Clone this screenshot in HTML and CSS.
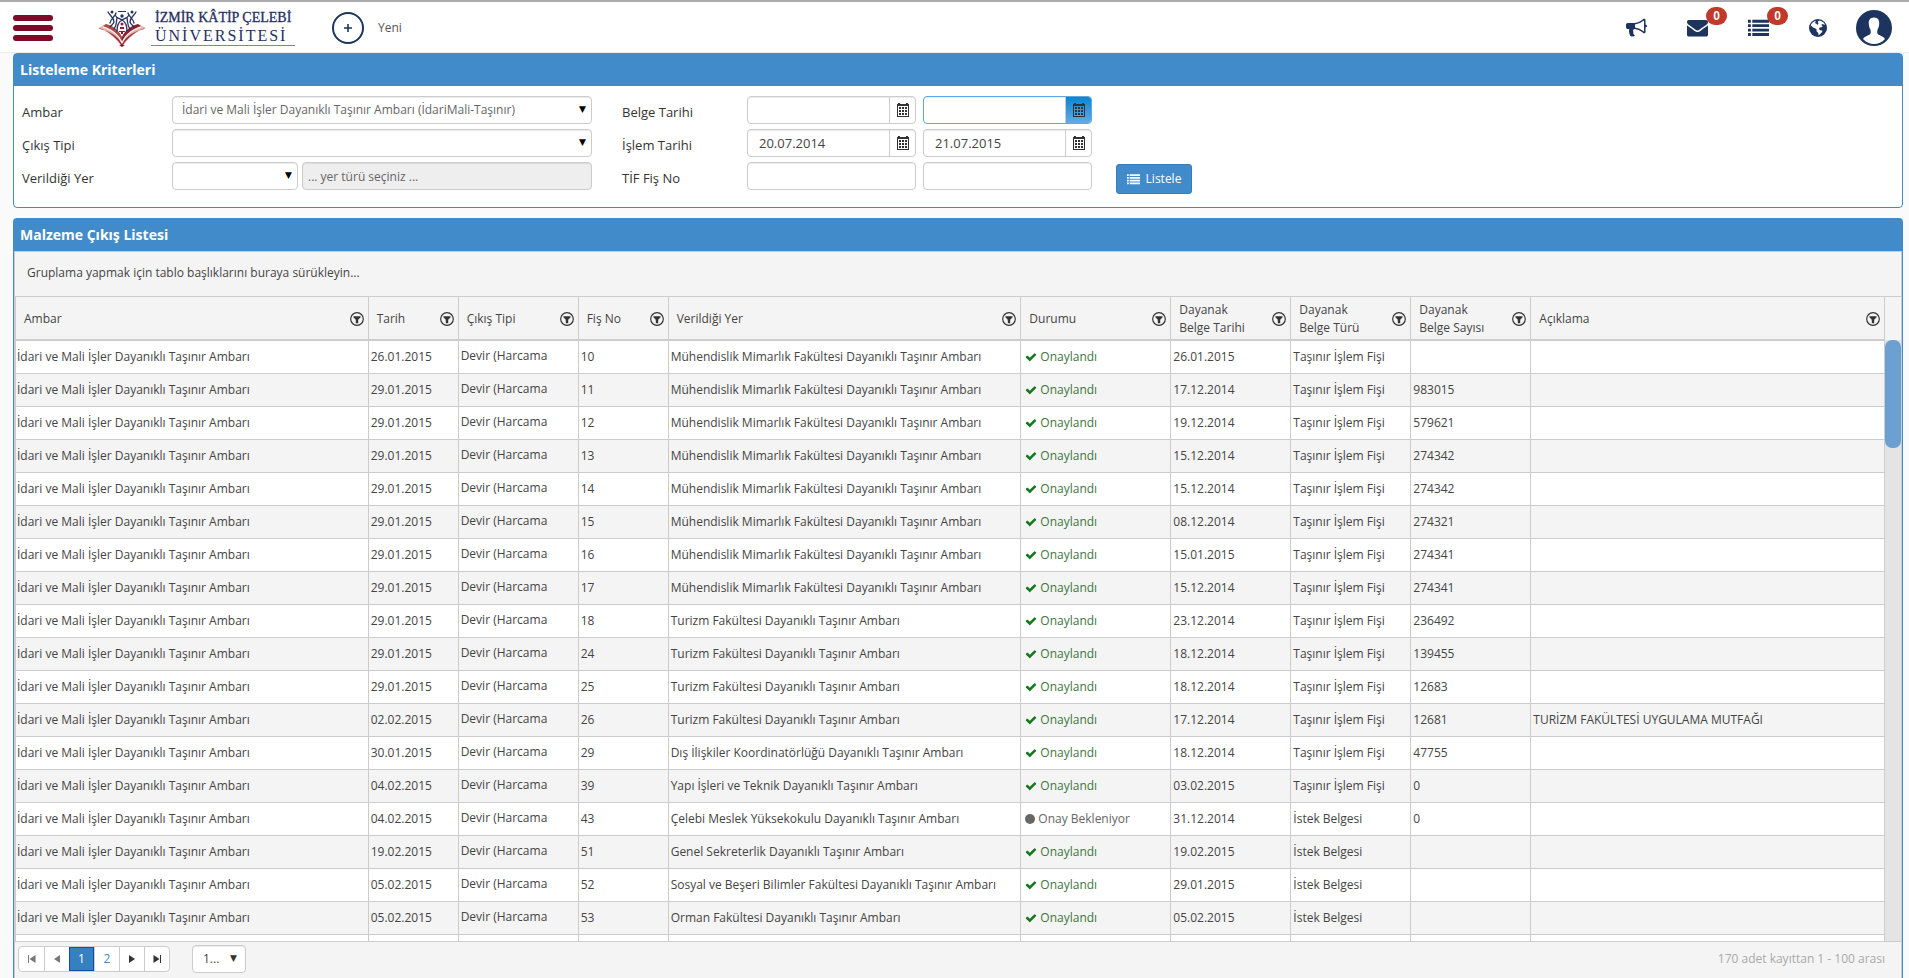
FILE: index.html
```html
<!DOCTYPE html>
<html lang="tr">
<head>
  <meta charset="utf-8">
  <title>Malzeme Çıkış Listesi</title>
  <link rel="stylesheet" href="styles.css">
</head>
<body>
  <svg class="sprite" aria-hidden="true">
    <symbol id="i-check" viewBox="0 0 1792 1792"><path d="M1671 566q0 40-28 68l-724 724-136 136q-28 28-68 28t-68-28l-136-136-362-362q-28-28-28-68t28-68l136-136q28-28 68-28t68 28l294 295 656-657q28-28 68-28t68 28l136 136q28 28 28 68z"/></symbol>
    <symbol id="i-circle" viewBox="0 0 12 12"><circle cx="6" cy="6" r="6"/></symbol>
    <symbol id="i-filter" viewBox="0 0 14 14"><circle cx="7" cy="7" r="6.3" fill="none" stroke="currentColor" stroke-width="1.2"/><path d="M3.400 4.200h7.200v1L8.200 7.800v3.400H5.800V7.800L3.400 5.200z"/></symbol>
    <symbol id="i-list" viewBox="0 0 22 18"><path d="M0 1h3v3H0zM4.500 1H22v3H4.500zM0 5.600h3v3H0zM4.500 5.600H22v3H4.500zM0 10.200h3v3H0zM4.500 10.200H22v3H4.500zM0 14.800h3v3H0zM4.500 14.800H22v3H4.500z"/></symbol>
    <symbol id="i-calendar" viewBox="0 0 12 14"><path fill-rule="evenodd" d="M1 0h2v1h6V0h2v1h1v13H0V1h1zM1 3v10h10V3z"/><path d="M2 4h2v2H2zM5 4h2v2H5zM8 4h2v2H8zM2 7h2v2H2zM5 7h2v2H5zM8 7h2v2H8zM2 10h2v2H2zM5 10h2v2H5zM8 10h2v2H8z"/></symbol>
  </svg>

  <header class="topbar">
    <button class="menu-btn" aria-label="Menü"><span></span><span></span><span></span></button>
    <a class="logo" href="#">
      <svg class="logo-mark" viewBox="0 0 48 38" aria-hidden="true">
        <path d="M0 19l8-4c8 2 13 7 16 13 3-6 8-11 16-13l8 4c-9 3-17 9-24 19C17 28 9 22 0 19z" fill="#e3b9b0"/>
        <path d="M8 15c8 2 13 7 16 13v5c-3-8-10-13-19-16z" fill="#b04a48"/>
        <path d="M40 15c-8 2-13 7-16 13v5c3-8 10-13 19-16z" fill="#8c1f33"/>
        <path d="M2 20c9 2 18 7 22 15 4-8 13-13 22-15l1-1c-9 3-17 9-22 17h-2C18 28 10 22 1 19z" fill="#9a2f3c"/>
        <path d="M5 18c9 3 16 8 19 16 3-8 10-13 19-16" fill="none" stroke="#fff"/>
        <path d="M21 36h6l-3 2z" fill="#7d1128"/>
        <g fill="none" stroke="#26345f" stroke-width="1.300" stroke-linecap="round">
          <path d="M10 3c2 4 6 5 6 10-1 3-3 3-4 5M18 4c-1 4-5 5-6 10M38 3c-2 4-6 5-6 10 1 3 3 3 4 5M30 4c1 4 5 5 6 10M17 6c2 4 5 3 7 5 2-2 5-1 7-5M24 11c-4 2-5 5-5 11M24 11c4 2 5 5 5 11M19 9c-1 5 0 7-3 11M29 9c1 5 0 7 3 11"/>
        </g>
        <g fill="#26345f"><circle cx="14" cy="3" r="1.500"/><circle cx="34" cy="3" r="1.500"/><circle cx="24" cy="7" r="1.700"/><path d="M20 2h8v1h-8z"/></g>
        <g fill="#a3122f"><circle cx="24" cy="15" r="1.500"/><path d="M22 18h4v2h-4zM21 22h6v1h-2v2h-2v-2h-2z"/></g>
      </svg>
      <span class="logo-text"><span>İZMİR KÂTİP ÇELEBİ</span><span class="logo-sub">ÜNİVERSİTESİ</span></span>
    </a>
    <button class="new-btn">
      <svg width="32" height="32" viewBox="0 0 32 32" aria-hidden="true"><circle cx="16" cy="16" r="15" fill="none" stroke="#1d355e" stroke-width="2"/><path d="M16 12v8M12 16h8" stroke="#1d355e" stroke-width="1.600"/></svg>
      Yeni
    </button>
    <nav class="tools">
      <a class="tool" href="#" aria-label="Duyurular"><svg width="21" height="21" viewBox="0 0 1792 1792"><path d="M1664 640q53 0 90.500 37.500t37.500 90.500-37.500 90.500-90.500 37.500v384q0 52-38 90t-90 38q-417-347-812-380-58 19-91 66t-31 100.500 40 92.500q-20 33-23 65.500t6 58 33.500 55 48 50 61.500 50.500q-29 58-111.500 83t-168.500 11.500-132-55.500q-7-23-29.500-87.500t-32-94.500-23-89-15-101 3.500-98.500 22-110.500h-122q-66 0-113-47t-47-113v-192q0-66 47-113t113-47h480q435 0 896-384 52 0 90 38t38 90v384zm-128 604v-954q-394 302-768 343v270q377 42 768 341z"/></svg></a>
      <a class="tool" href="#" aria-label="Mesajlar"><svg width="21" height="21" viewBox="0 0 1792 1792"><path d="M1792 710v794q0 66-47 113t-113 47h-1472q-66 0-113-47t-47-113v-794q44 49 101 87 362 246 497 345 57 42 92.500 65.500t94.500 48 110 24.500h2q51 0 110-24.500t94.500-48 92.500-65.500q170-123 498-345 57-39 100-87zm0-294q0 79-49 151t-122 123q-376 261-468 325-10 7-42.500 31t-54 38.500-52 32.500-57.500 27-50 9h-2q-23 0-50-9t-57.500-27-52-32.500-54-38.500-42.500-31q-91-64-262-182.500t-205-142.500q-62-42-117-115.500t-55-136.500q0-78 41.500-130t118.500-52h1472q65 0 112.500 47t47.500 113z"/></svg><span class="badge">0</span></a>
      <a class="tool" href="#" aria-label="Görevler"><svg width="21" height="21"><use href="#i-list"/></svg><span class="badge">0</span></a>
      <a class="tool" href="#" aria-label="Dil"><svg width="18" height="18" viewBox="0 0 18 18"><circle cx="9" cy="9" r="9"/><path fill="#fff" d="M10 1.500l2 .5 2.500 1.500 1.500 2-1 .3-1-.8-1.500.6.3 1.200 1 .6-1.300.8-1.700.2-1 1.600 1.500 1.300 2 .3-.2 1.500-2 2-1.500 1.500-.3-2.600-1.800-1.700.2-1.800L6 9.200 4 8.500 2.500 6.500l-.7 1.700L2 5.500 3.800 3.200 6 2l1 .8L5.500 4l1.700.6L8.500 6l1-1.400L8.800 3z"/></svg></a>
      <a class="tool avatar" href="#" aria-label="Profil"><svg width="36" height="36" viewBox="0 0 36 36"><circle cx="18" cy="18" r="18"/><path fill="#fff" d="M18 7.500c4 0 5.500 2.800 5.200 6.300-.2 3-1 4.700-1.700 6-.5 2.200-.3 4 .8 4.700 2.500 1.500 5.700 2 6.700 4.500C26 32.200 22 34 18 34s-8-1.800-11-5c1-2.500 4.200-3 6.700-4.500 1.100-.7 1.300-2.500.8-4.700-.7-1.300-1.500-3-1.700-6-.3-3.500 1.200-6.300 5.200-6.300z"/></svg></a>
    </nav>
  </header>

  <main class="page">
    <section class="panel">
      <h2 class="panel-heading">Listeleme Kriterleri</h2>
      <form class="criteria">
        <label for="ambar">Ambar</label>
        <div class="select"><select id="ambar"><option>İdari ve Mali İşler Dayanıklı Taşınır Ambarı (İdariMali-Taşınır)</option></select></div>
        <label class="second" for="belge1">Belge Tarihi</label>
        <div class="date"><input type="text" id="belge1"><button type="button" aria-label="Takvim"><svg width="12" height="14"><use href="#i-calendar"/></svg></button></div>
        <div class="date active"><input type="text" aria-label="Belge tarihi bitiş"><button type="button" aria-label="Takvim"><svg width="12" height="14"><use href="#i-calendar"/></svg></button></div>

        <label class="first" for="cikis">Çıkış Tipi</label>
        <div class="select"><select id="cikis"><option></option></select></div>
        <label class="second" for="islem1">İşlem Tarihi</label>
        <div class="date"><input type="text" id="islem1" value="20.07.2014"><button type="button" aria-label="Takvim"><svg width="12" height="14"><use href="#i-calendar"/></svg></button></div>
        <div class="date"><input type="text" value="21.07.2015" aria-label="İşlem tarihi bitiş"><button type="button" aria-label="Takvim"><svg width="12" height="14"><use href="#i-calendar"/></svg></button></div>

        <label class="first" for="yer">Verildiği Yer</label>
        <div class="place">
          <div class="select"><select id="yer"><option></option></select></div>
          <input class="field" type="text" placeholder="... yer türü seçiniz ..." aria-label="Yer" disabled>
        </div>
        <label class="second" for="tif1">TİF Fiş No</label>
        <input class="field" type="text" id="tif1">
        <input class="field" type="text" aria-label="TİF fiş no bitiş">
        <button type="button" class="btn"><svg width="13" height="12"><use href="#i-list"/></svg>Listele</button>
      </form>
    </section>

    <section class="panel list-panel">
      <h2 class="panel-heading">Malzeme Çıkış Listesi</h2>
      <div class="group-bar">Gruplama yapmak için tablo başlıklarını buraya sürükleyin...</div>
      <div class="grid">
        <div class="grid-scroll">
          <table>
            <colgroup><col><col class="w90"><col class="w120"><col class="w90"><col><col class="w150"><col class="w120"><col class="w120"><col class="w120"><col></colgroup>
            <thead><tr id="head"></tr></thead>
            <tbody id="rows"></tbody>
          </table>
        </div>
        <div class="scrollbar"><div class="scroll-track"><div class="scroll-thumb"></div></div></div>
      </div>
      <footer class="pager">
        <div class="pages">
          <button disabled aria-label="İlk sayfa"><svg width="8" height="8" viewBox="0 0 8 8"><path d="M0 0h1v8H0zM7.500 0v8L1.500 4z"/></svg></button>
          <button disabled aria-label="Önceki sayfa"><svg width="8" height="8" viewBox="0 0 8 8"><path d="M7 0v8L1 4z"/></svg></button>
          <button class="current">1</button>
          <button class="num">2</button>
          <button aria-label="Sonraki sayfa"><svg width="8" height="8" viewBox="0 0 8 8"><path d="M1 0v8l6-4z"/></svg></button>
          <button aria-label="Son sayfa"><svg width="8" height="8" viewBox="0 0 8 8"><path d="M7 0h1v8H7zM.5 0v8l6-4z"/></svg></button>
        </div>
        <div class="select page-size"><select aria-label="Sayfa boyutu"><option>1...</option></select></div>
        <span class="pager-info">170 adet kayıttan 1 - 100 arası</span>
      </footer>
    </section>
  </main>

  <script>
    const heads = ["Ambar", "Tarih", "Çıkış Tipi", "Fiş No", "Verildiği Yer", "Durumu",
      "Dayanak Belge Tarihi", "Dayanak Belge Türü", "Dayanak Belge Sayısı", "Açıklama"];
    const muh = "Mühendislik Mimarlık Fakültesi", tur = "Turizm Fakültesi";
    const tif = "Taşınır İşlem Fişi", istek = "İstek Belgesi";

    // tarih, fiş no, verildiği yer, belge tarihi, belge türü, belge sayısı, açıklama
    const data = [
      ["26.01.2015", 10, muh, "26.01.2015", tif, ""],
      ["29.01.2015", 11, muh, "17.12.2014", tif, "983015"],
      ["29.01.2015", 12, muh, "19.12.2014", tif, "579621"],
      ["29.01.2015", 13, muh, "15.12.2014", tif, "274342"],
      ["29.01.2015", 14, muh, "15.12.2014", tif, "274342"],
      ["29.01.2015", 15, muh, "08.12.2014", tif, "274321"],
      ["29.01.2015", 16, muh, "15.01.2015", tif, "274341"],
      ["29.01.2015", 17, muh, "15.12.2014", tif, "274341"],
      ["29.01.2015", 18, tur, "23.12.2014", tif, "236492"],
      ["29.01.2015", 24, tur, "18.12.2014", tif, "139455"],
      ["29.01.2015", 25, tur, "18.12.2014", tif, "12683"],
      ["02.02.2015", 26, tur, "17.12.2014", tif, "12681", "TURİZM FAKÜLTESİ UYGULAMA MUTFAĞI"],
      ["30.01.2015", 29, "Dış İlişkiler Koordinatörlüğü", "18.12.2014", tif, "47755"],
      ["04.02.2015", 39, "Yapı İşleri ve Teknik", "03.02.2015", tif, "0"],
      ["04.02.2015", 43, "Çelebi Meslek Yüksekokulu", "31.12.2014", istek, "0"],
      ["19.02.2015", 51, "Genel Sekreterlik", "19.02.2015", istek, ""],
      ["05.02.2015", 52, "Sosyal ve Beşeri Bilimler Fakültesi", "29.01.2015", istek, ""],
      ["05.02.2015", 53, "Orman Fakültesi", "05.02.2015", istek, ""]
    ];

    document.getElementById("head").innerHTML = heads.map(h => `
      <th><div class="th"><span>${h.replace("Dayanak ", "Dayanak<br>")}</span><svg width="14" height="14"><use href="#i-filter"/></svg></div></th>
    `).join("");

    const ok = '<span class="ok"><svg width="12" height="12"><use href="#i-check"/></svg>Onaylandı</span>';
    const waiting = '<span class="waiting"><svg width="10" height="10"><use href="#i-circle"/></svg>Onay Bekleniyor</span>';

    document.getElementById("rows").innerHTML = data.map(d => `
      <tr>
        <td>İdari ve Mali İşler Dayanıklı Taşınır Ambarı</td>
        <td>${d[0]}</td><td class="type">Devir (Harcama</td><td>${d[1]}</td>
        <td>${d[2]} Dayanıklı Taşınır Ambarı</td>
        <td>${d[1] === 43 ? waiting : ok}</td>
        <td>${d[3]}</td><td>${d[4]}</td><td>${d[5]}</td><td>${d[6] || ""}</td>
      </tr>
    `).join("") + "<tr>" + "<td></td>".repeat(10) + "</tr>";
  </script>
</body>
</html>
```
FILE: styles.css
```css
* {
  box-sizing: border-box;
}

body {
  display: flex;
  flex-direction: column;
  height: 100vh;
  margin: 0;
  overflow: hidden;
  background: #fafafa;
  color: #444;
  font-family: "Open Sans", sans-serif;
  font-size: 12px;
  line-height: 18px;
}

button,
input,
select {
  font: inherit;
  color: inherit;
}

button {
  padding: 0;
  border: none;
  background: none;
  cursor: pointer;
}

svg {
  flex: none;
  fill: currentColor;
}

.sprite {
  position: absolute;
  width: 0;
  height: 0;
}

/* top bar */
.topbar {
  display: flex;
  align-items: center;
  flex: none;
  height: 53px;
  padding: 1px 17px 0 13px;
  background: #fff;
  border-top: 2px solid #aaa;
  border-bottom: 1px solid #eee;
}

.menu-btn {
  display: flex;
  flex-direction: column;
  gap: 4px;
  width: 40px;
}

.menu-btn span {
  height: 6px;
  border-radius: 3px;
  background: #7f0a28;
}

.logo {
  display: flex;
  align-items: center;
  gap: 5px;
  margin-left: 45px;
  color: #26305f;
  text-decoration: none;
}

.logo-mark {
  width: 48px;
  height: 38px;
}

.logo-text {
  display: flex;
  flex-direction: column;
  width: 144px;
  padding-left: 4px;
  border-bottom: 1px solid #7c86ad;
  font-family: "Liberation Serif", serif;
  font-size: 14px;
  white-space: nowrap;
  -webkit-text-stroke: 0.3px;
}

.logo-sub {
  font-size: 16px;
  letter-spacing: 2px;
  -webkit-text-stroke: 0;
}

.new-btn {
  display: flex;
  align-items: center;
  gap: 14px;
  margin-left: 37px;
  color: #555;
}

.tools {
  display: flex;
  align-items: center;
  gap: 40px;
  margin-left: auto;
}

.tool {
  position: relative;
  display: flex;
  color: #1d355e;
}

.avatar {
  margin-left: -11px;
}

.badge {
  position: absolute;
  top: -10px;
  left: 19px;
  width: 21px;
  height: 18px;
  border-radius: 9px;
  background: #c0392b;
  color: #fff;
  font: bold 12px/18px "Liberation Sans", sans-serif;
  text-align: center;
}

/* panels */
.page {
  display: flex;
  flex-direction: column;
  flex: 1;
  gap: 10px;
  min-height: 0;
  padding: 0 6px 0 13px;
}

.panel {
  border: 1px solid #428bca;
  border-radius: 4px;
  background: #fff;
}

.panel-heading {
  margin: 0;
  padding: 5px 6px 6px;
  background: #428bca;
  color: #fff;
  font-size: 14px;
  font-weight: 700;
  line-height: 21px;
}

.criteria {
  display: grid;
  grid-template-columns: 150px 420px 155px 169px 169px 76px;
  grid-auto-rows: 28px;
  row-gap: 5px;
  padding: 10px 8px 17px;
}

.criteria label {
  padding-top: 7px;
  color: #333;
  font-size: 13px;
}

.criteria .first {
  grid-column: 1;
}

.criteria .second {
  padding-left: 30px;
}

.select {
  position: relative;
}

.select select {
  width: 100%;
  height: 28px;
  padding: 0 9px;
  appearance: none;
  border: 1px solid #ccc;
  border-radius: 4px;
  background: #fff;
  box-shadow: inset 0 1px 1px rgba(0, 0, 0, 0.08);
  color: #666;
}

.select::after {
  content: "▼";
  position: absolute;
  top: 4px;
  right: 6px;
  color: #000;
  font: 9px/18px "DejaVu Sans", sans-serif;
  pointer-events: none;
}

.field,
.date {
  height: 28px;
  border: 1px solid #ccc;
  border-radius: 4px;
  background: #fff;
  box-shadow: inset 0 1px 1px rgba(0, 0, 0, 0.08);
}

.field {
  width: 100%;
  padding: 0 5px;
}

.field:disabled {
  background: #eee;
}

.field::placeholder {
  color: #666;
}

.place {
  display: grid;
  grid-template-columns: 126px 1fr;
  gap: 4px;
}

.date {
  display: flex;
  overflow: hidden;
}

/* second box of a from/to pair */
.date + .date,
.field + .field,
.btn {
  width: auto;
  min-width: 0;
}

.date input {
  flex: 1;
  min-width: 0;
  padding: 0 11px;
  border: none;
  outline: none;
  background: none;
  font-size: 13px;
}

.date button {
  display: flex;
  align-items: center;
  justify-content: center;
  width: 26px;
  border-left: 1px solid #ccc;
  color: #333;
}

.active {
  border-color: #5ba8e5;
}

.active button {
  background: linear-gradient(#0a86cf, #62abe8);
}

.date + .date,
.field + .field {
  margin-left: 7px;
  margin-right: -7px;
}

.btn {
  display: flex;
  align-items: center;
  justify-content: center;
  gap: 6px;
  height: 30px;
  margin: 2px -31px 0 31px;
  border: 1px solid #357ebd;
  border-radius: 3px;
  background: #428bca;
  color: #fff;
}

/* list */
.list-panel {
  display: flex;
  flex-direction: column;
  flex: 1;
  min-height: 0;
  border-bottom: none;
  border-radius: 4px 4px 0 0;
}

.group-bar {
  height: 45px;
  padding: 12px;
  border: 1px solid #ccc;
  border-bottom: none;
  background: #f4f4f4;
}

.grid {
  display: flex;
  flex: 1;
  min-height: 0;
  border: 1px solid #ccc;
  border-left-width: 2px;
}

.grid-scroll {
  flex: 1;
  overflow: hidden;
}

table {
  width: 100%;
  table-layout: fixed;
  border-collapse: separate;
  border-spacing: 0;
}

.w90 {
  width: 90px;
}

.w120 {
  width: 120px;
}

.w150 {
  width: 150px;
}

th {
  height: 44px;
  padding: 2px 4px 0 8px;
  border-right: 1px solid #ccc;
  border-bottom: 2px solid #ccc;
  background: #f4f4f4;
  font-weight: 400;
  text-align: left;
}

.th {
  display: flex;
  align-items: center;
  justify-content: space-between;
}

.th svg {
  color: #333;
}

td {
  height: 33px;
  padding: 0 2px;
  border-right: 1px solid #ccc;
  border-bottom: 1px solid #ccc;
  white-space: nowrap;
}

td:first-child {
  padding-left: 1px;
}

th:last-child,
td:last-child {
  border-right: none;
}

tbody tr:nth-child(even) {
  background: #f4f4f4;
}

.type {
  padding-bottom: 3px;
}

.ok,
.waiting {
  display: flex;
  align-items: center;
  gap: 3px;
  padding-left: 2px;
}

.ok {
  color: #3c763d;
}

.ok svg {
  color: #14791c;
}

.waiting {
  color: #666;
}

.scrollbar {
  display: flex;
  flex-direction: column;
  width: 17px;
  padding-top: 43px;
  border-left: 1px solid #ccc;
  background: #f4f4f4;
}

.scroll-track {
  flex: 1;
  background: #e4e4e4;
}

.scroll-thumb {
  height: 108px;
  border-radius: 7px;
  background: #6ca0d0;
}

/* pager */
.pager {
  display: flex;
  align-items: center;
  flex: none;
  height: 36px;
  padding: 0 16px 2px 3px;
  border: 1px solid #ccc;
  border-width: 0 1px;
  background: #f4f4f4;
}

.pages {
  display: flex;
  border: 1px solid #ccc;
  border-radius: 4px;
  background: #fff;
}

.pages button {
  display: flex;
  align-items: center;
  justify-content: center;
  width: 25px;
  height: 24px;
  border-left: 1px solid #ccc;
  color: #333;
}

.pages button:first-child {
  border-left: none;
}

.pages button:disabled {
  color: #777;
}

.pages .num {
  color: #428bca;
}

.pages .current {
  border: 1px solid #0d4fa8;
  background: #3580c0;
  color: #fff;
}

.page-size {
  width: 54px;
  margin-left: 22px;
}

.page-size select {
  padding-left: 10px;
  color: #444;
}

.page-size::after {
  right: 9px;
  color: #333;
}

.pager-info {
  margin-left: auto;
  color: #aaa;
}
```
